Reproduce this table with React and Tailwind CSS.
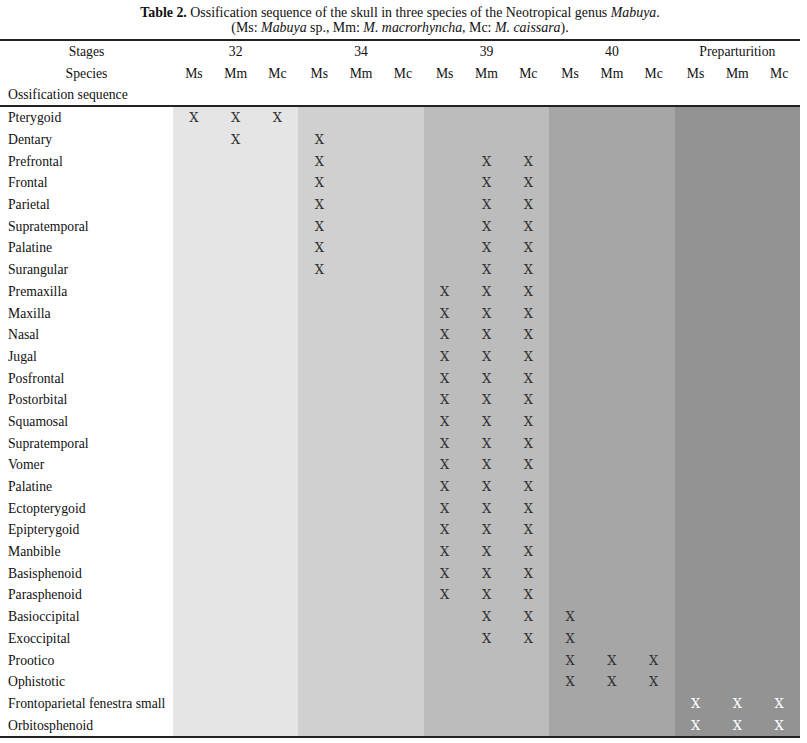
import React from "react";

const rows = [
  ["Pterygoid", [0, 1, 2]],
  ["Dentary", [1, 3]],
  ["Prefrontal", [3, 7, 8]],
  ["Frontal", [3, 7, 8]],
  ["Parietal", [3, 7, 8]],
  ["Supratemporal", [3, 7, 8]],
  ["Palatine", [3, 7, 8]],
  ["Surangular", [3, 7, 8]],
  ["Premaxilla", [6, 7, 8]],
  ["Maxilla", [6, 7, 8]],
  ["Nasal", [6, 7, 8]],
  ["Jugal", [6, 7, 8]],
  ["Posfrontal", [6, 7, 8]],
  ["Postorbital", [6, 7, 8]],
  ["Squamosal", [6, 7, 8]],
  ["Supratemporal", [6, 7, 8]],
  ["Vomer", [6, 7, 8]],
  ["Palatine", [6, 7, 8]],
  ["Ectopterygoid", [6, 7, 8]],
  ["Epipterygoid", [6, 7, 8]],
  ["Manbible", [6, 7, 8]],
  ["Basisphenoid", [6, 7, 8]],
  ["Parasphenoid", [6, 7, 8]],
  ["Basioccipital", [7, 8, 9]],
  ["Exoccipital", [7, 8, 9]],
  ["Prootico", [9, 10, 11]],
  ["Ophistotic", [9, 10, 11]],
  ["Frontoparietal fenestra small", [12, 13, 14]],
  ["Orbitosphenoid", [12, 13, 14]],
];

const groups = [
  { label: "32", bg: "bg-[#e5e5e5]", x: "text-[#333]" },
  { label: "34", bg: "bg-[#d0d0d0]", x: "text-[#333]" },
  { label: "39", bg: "bg-[#bcbcbc]", x: "text-[#333]" },
  { label: "40", bg: "bg-[#a6a6a6]", x: "text-[#333]" },
  { label: "Preparturition", bg: "bg-[#939393]", x: "text-white" },
];

const species = ["Ms", "Mm", "Mc"];

export default function App() {
  return (
    <div className="w-[807px] h-[743px] bg-white text-[#111] text-[13.7px] leading-[15px]" style={{ fontFamily: '"Liberation Serif", "Times New Roman", serif' }}>
      <div className="w-[800px]">
        <div className="pt-[5px] h-[39px] text-center text-[13.9px]">
          <div>
            <span className="font-bold">Table 2.</span> Ossification sequence of the skull in three species of the Neotropical genus <i>Mabuya</i>.
          </div>
          <div>
            (Ms: <i>Mabuya</i> sp., Mm: <i>M. macrorhyncha</i>, Mc: <i>M. caissara</i>).
          </div>
        </div>
        <div className="border-t-2 border-[#222]" />
        <div className="flex h-[21.5px] items-center">
          <div className="w-[173px] text-center">Stages</div>
          {groups.map((g) => (
            <div key={g.label} className="flex-1 text-center">{g.label}</div>
          ))}
        </div>
        <div className="flex h-[21.5px] items-center">
          <div className="w-[173px] text-center">Species</div>
          {groups.map((g) => (
            <div key={g.label} className="flex-1 grid grid-cols-3">
              {species.map((s) => (
                <div key={s} className="text-center">{s}</div>
              ))}
            </div>
          ))}
        </div>
        <div className="flex h-[21px] items-center">
          <div className="pl-[8px]">Ossification sequence</div>
        </div>
        <div className="border-t-2 border-[#222]" />
        <div className="flex h-[629px]">
          <div className="w-[173px] flex flex-col">
            {rows.map(([name], i) => (
              <div key={i} className="flex-1 flex items-center pl-[8px] whitespace-nowrap">{name}</div>
            ))}
          </div>
          {groups.map((g, gi) => (
            <div key={g.label} className={`flex-1 flex flex-col ${g.bg}`}>
              {rows.map(([name, xs], i) => (
                <div key={i} className="flex-1 grid grid-cols-3 items-center">
                  {[0, 1, 2].map((c) => (
                    <div
                      key={c}
                      className={`text-center text-[13px] ${g.x}`}
                      style={{ fontFamily: '"DejaVu Serif", serif' }}
                    >
                      {xs.includes(gi * 3 + c) ? "X" : ""}
                    </div>
                  ))}
                </div>
              ))}
            </div>
          ))}
        </div>
        <div className="border-t-2 border-[#222]" />
      </div>
    </div>
  );
}
